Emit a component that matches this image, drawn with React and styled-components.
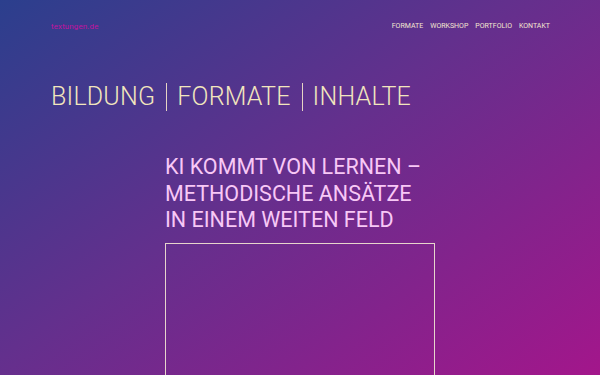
import React from "react";
import styled, { createGlobalStyle } from "styled-components";

const GlobalStyle = createGlobalStyle`
  html, body {
    margin: 0;
    padding: 0;
    height: 100%;
  }
  body {
    font-family: Roboto, "Liberation Sans", sans-serif;
    background: #6a2a8c;
    overflow: hidden;
  }
`;

const Page = styled.div`
  width: 600px;
  height: 375px;
  overflow: hidden;
  background: linear-gradient(145deg, #2b3f8d 0%, #63308d 45%, #a3168b 100%);
`;

const Header = styled.header`
  display: flex;
  justify-content: space-between;
  align-items: center;
  padding: 20px 50px 0 51px;
  height: 12px;
`;

const Logo = styled.a`
  font-size: 8px;
  color: #c2129f;
  text-decoration: none;
  letter-spacing: 0.1px;
`;

const Nav = styled.nav`
  display: flex;
  gap: 7px;
`;

const NavLink = styled.a`
  font-size: 7px;
  color: #f4e6d0;
  text-decoration: none;
  text-transform: uppercase;
`;

const Title = styled.h1`
  margin: 49px 0 0 51px;
  font-weight: 300;
  font-size: 25px;
  line-height: 32px;
  color: #f2e6bd;
  letter-spacing: 0.2px;
  display: flex;
  align-items: center;
`;

const Sep = styled.span`
  display: inline-block;
  width: 1px;
  height: 28px;
  background: #e6d4c4;
  margin: 0 10px 0 11px;
`;

const Column = styled.section`
  width: 270px;
  margin: 41px auto 0;
`;

const Headline = styled.h2`
  margin: 0;
  font-size: 21.5px;
  font-weight: 400;
  line-height: 26.5px;
  color: #f8c8f6;
  text-transform: uppercase;
`;

const Frame = styled.div`
  margin-top: 9px;
  height: 200px;
  border: 1px solid #e7d5cc;
`;

export default function App() {
  return (
    <Page>
      <GlobalStyle />
      <Header>
        <Logo href="#">textungen.de</Logo>
        <Nav>
          {["Formate", "Workshop", "Portfolio", "Kontakt"].map((n) => (
            <NavLink key={n} href="#">
              {n}
            </NavLink>
          ))}
        </Nav>
      </Header>
      <Title>
        BILDUNG
        <Sep />
        FORMATE
        <Sep />
        INHALTE
      </Title>
      <Column>
        <Headline>
          KI kommt von Lernen –<br />
          methodische Ansätze
          <br />
          in einem weiten Feld
        </Headline>
        <Frame />
      </Column>
    </Page>
  );
}
